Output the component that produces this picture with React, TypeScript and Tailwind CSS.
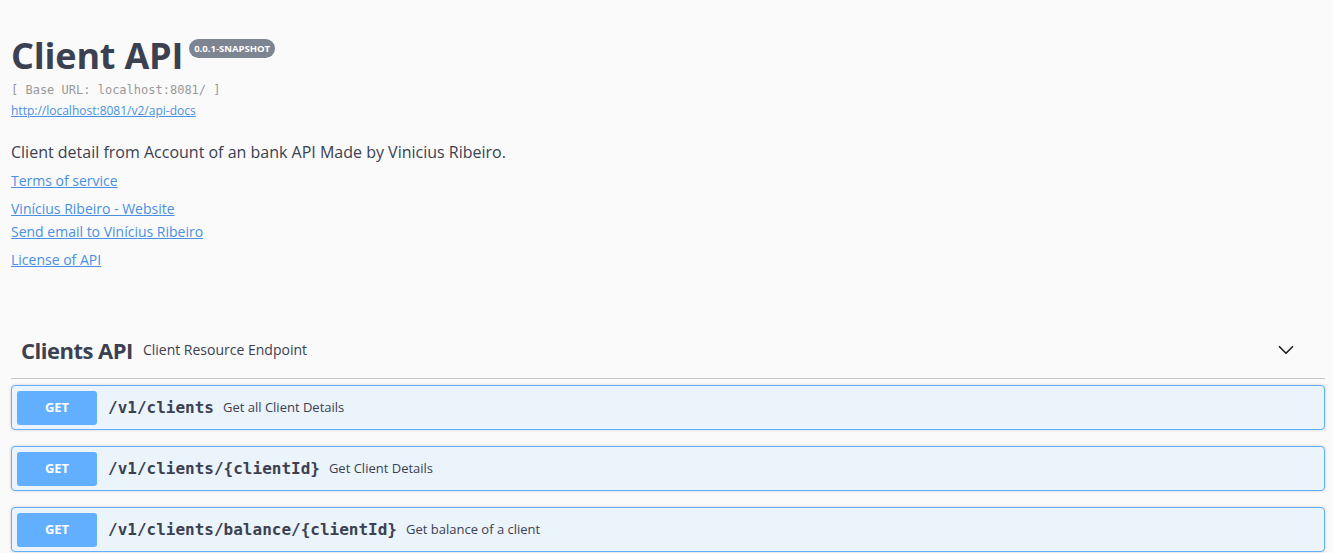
import { ChevronDown } from "lucide-react";

const ops = [
  { path: "/v1/clients", summary: "Get all Client Details" },
  { path: "/v1/clients/{clientId}", summary: "Get Client Details" },
  { path: "/v1/clients/balance/{clientId}", summary: "Get balance of a client" },
];

const sans = "font-['Open_Sans',sans-serif]";
const mono = "font-['DejaVu_Sans_Mono',monospace]";

export default function App() {
  return (
    <div className={`min-h-[553px] bg-[#fafafa] text-[#3b4151] ${sans}`}>
      <div className="pl-[11px] pr-[8px]">
        {/* Info */}
        <div className="pt-[33px]">
          <div className="flex items-start">
            <h2 className="text-[36px] font-bold leading-[45px] tracking-[-0.2px]">Client API</h2>
            <span className="ml-[6px] mt-[6px] rounded-full bg-[#7d8492] px-[5px] py-[3px] text-[9.5px] font-bold leading-[13px] text-white">
              0.0.1-SNAPSHOT
            </span>
          </div>
          <p className={`mt-[5px] text-[12px] leading-[15px] text-[#999] ${mono}`}>[ Base URL: localhost:8081/ ]</p>
          <a href="#" className="mt-[4px] block text-[12px] leading-[17px] text-[#4990e2] underline">
            http://localhost:8081/v2/api-docs
          </a>
          <p className="mt-[21px] text-[16px] leading-[24px]">
            Client detail from Account of an bank API Made by Vinicius Ribeiro.
          </p>
          <a href="#" className="mt-[7px] block text-[14px] leading-[20px] text-[#4990e2] underline">
            Terms of service
          </a>
          <a href="#" className="mt-[8px] block text-[14px] leading-[20px] text-[#4990e2] underline">
            Vinícius Ribeiro - Website
          </a>
          <a href="#" className="mt-[3px] block text-[14px] leading-[20px] text-[#4990e2] underline">
            Send email to Vinícius Ribeiro
          </a>
          <a href="#" className="mt-[8px] block text-[14px] leading-[20px] text-[#4990e2] underline">
            License of API
          </a>
        </div>

        {/* Tag section */}
        <div className="mt-[57px]">
          <div className="flex items-center border-b border-[#c8c8c8] pl-[10px] pr-[26px] pb-[13px] pt-[8px]">
            <span className="text-[22px] font-bold leading-[30px] tracking-[-0.5px]">Clients API</span>
            <span className="ml-[10px] text-[14px] leading-[20px]">Client Resource Endpoint</span>
            <ChevronDown className="ml-auto h-[26px] w-[26px] text-[#222]" strokeWidth={1.6} />
          </div>

          <div className="mt-[6px] flex flex-col gap-[16px]">
            {ops.map((op) => (
              <div
                key={op.path}
                className="flex h-[45px] items-center rounded-[4px] border border-[#61affe] bg-[#ebf3fb] px-[5px] shadow-[0_0_3px_rgba(0,0,0,0.19)]"
              >
                <span className="flex h-[34px] w-[80px] items-center justify-center rounded-[3px] bg-[#61affe] text-[13px] font-bold text-white">
                  GET
                </span>
                <span className={`ml-[11px] text-[16px] font-bold ${mono}`}>{op.path}</span>
                <span className="ml-[9px] text-[13px]">{op.summary}</span>
              </div>
            ))}
          </div>
        </div>
      </div>
    </div>
  );
}
